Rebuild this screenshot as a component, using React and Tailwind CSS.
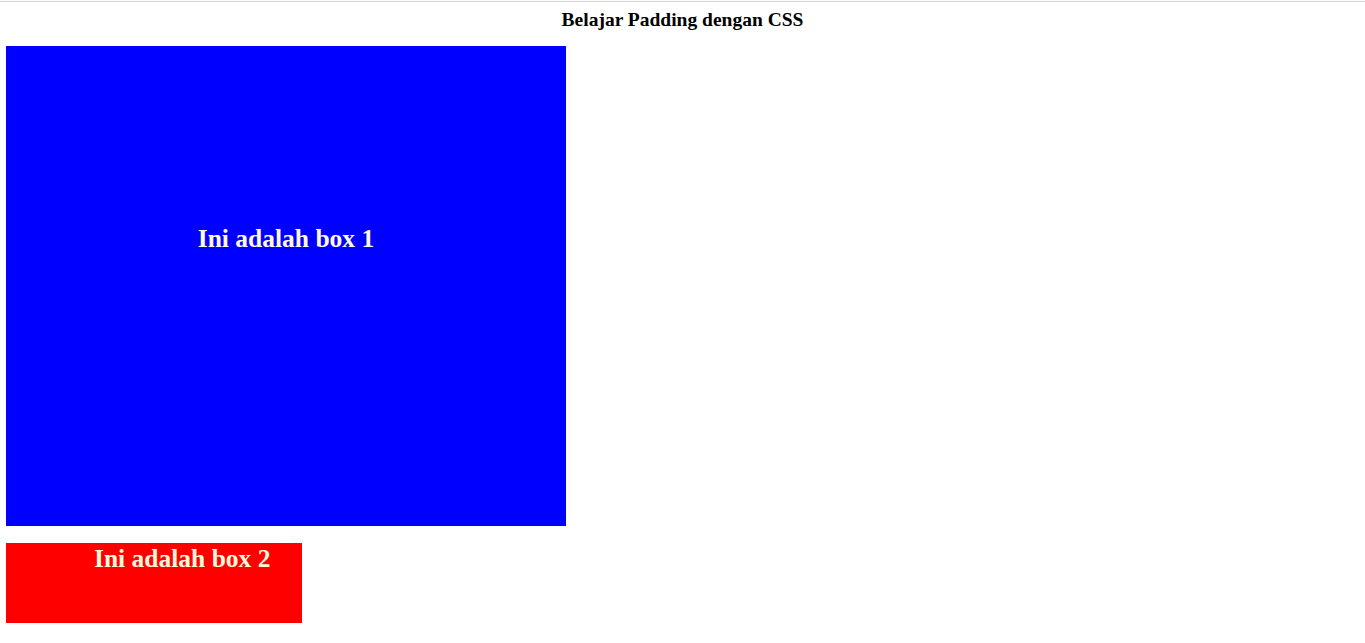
export default function App() {
  return (
    <div className="min-h-[643px] bg-white font-['Liberation_Serif','Times_New_Roman',serif]">
      {/* garis atas */}
      <div className="pt-px">
        <div className="h-px bg-[#d3d3d3]" />
      </div>

      <h1 className="mt-[8px] text-center text-[19.5px] leading-[20px] font-bold text-black">
        Belajar Padding dengan CSS
      </h1>

      <div className="mt-[16px] ml-[6px] flex flex-col">
        <div className="h-[480px] w-[560px] bg-[#0000ff] pt-[180px] text-center">
          <h2 className="text-[25.5px] leading-none font-bold text-[#fff8dc]">Ini adalah box 1</h2>
        </div>

        <div className="mt-[17px] h-[80px] w-[296px] bg-[#ff0000] pt-[3px] pl-[88px]">
          <h2 className="text-[25.5px] leading-none font-bold text-[#fff8dc]">Ini adalah box 2</h2>
        </div>
      </div>
    </div>
  );
}
